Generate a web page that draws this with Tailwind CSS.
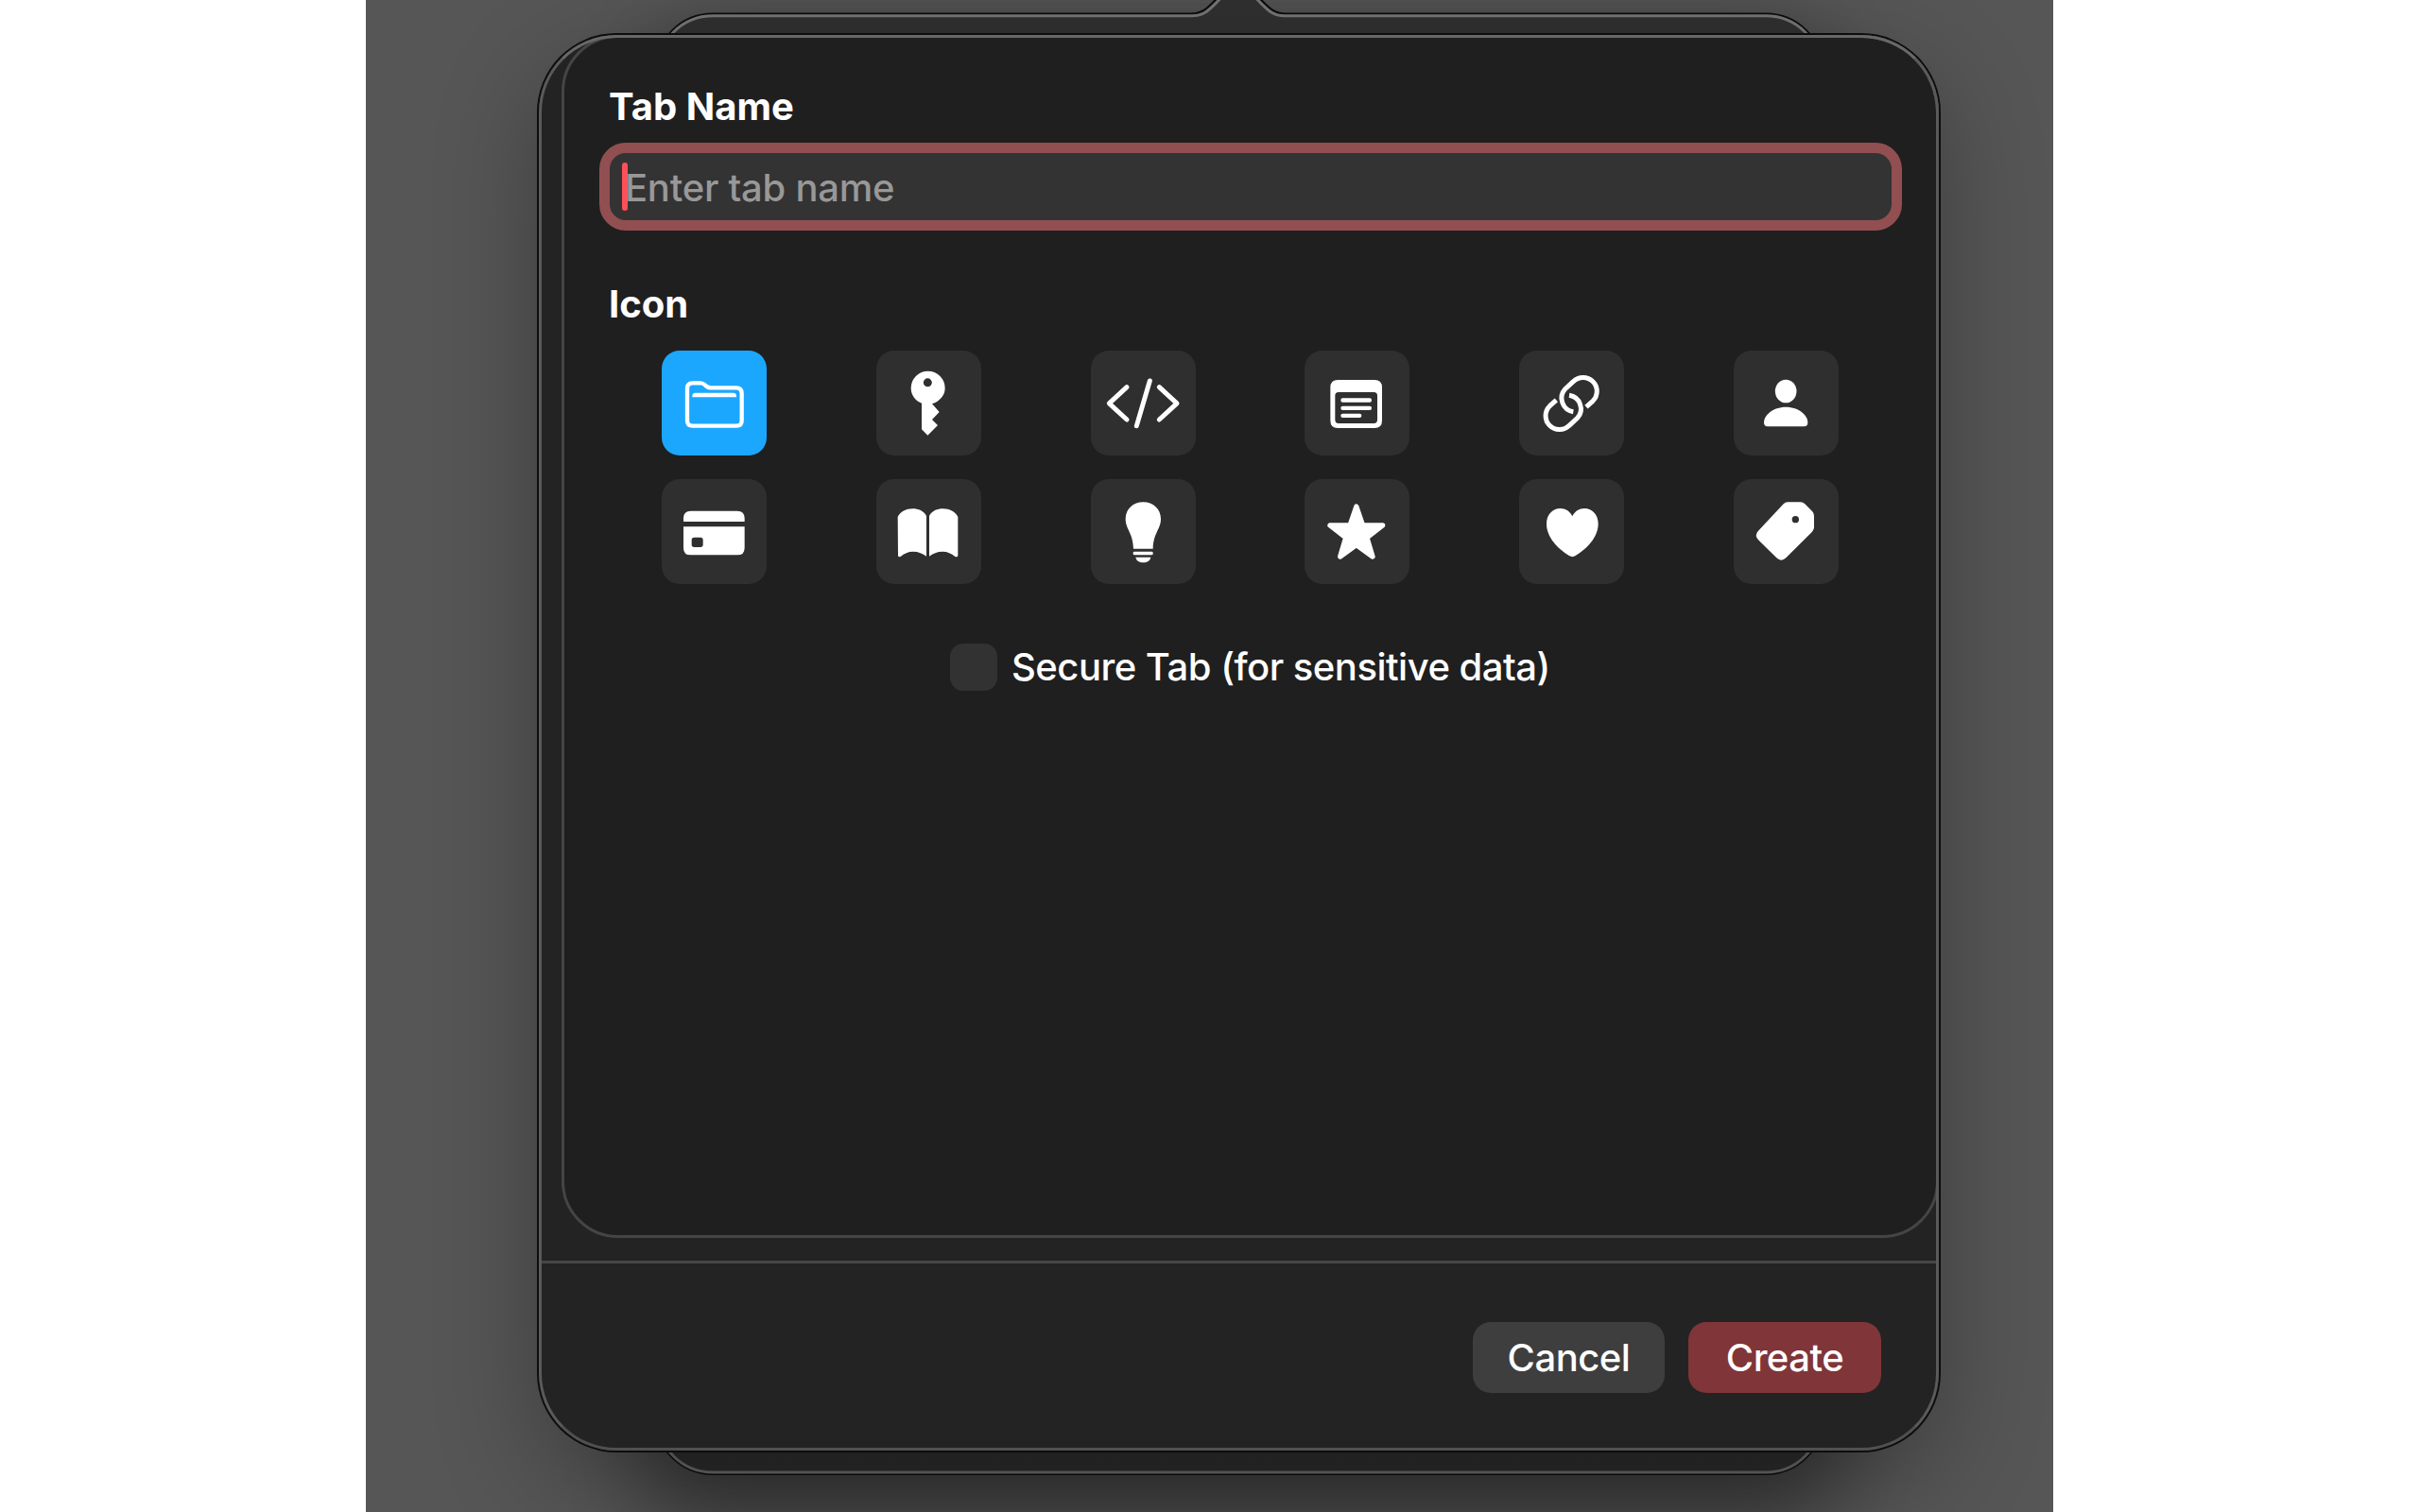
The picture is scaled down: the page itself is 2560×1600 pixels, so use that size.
<!DOCTYPE html>
<html lang="en">
<head>
<meta charset="utf-8">
<title>New Tab</title>
<script src="https://cdn.jsdelivr.net/npm/@tailwindcss/browser@4"></script>
</head>
<body class="bg-white w-[2560px] h-[1600px] overflow-hidden font-[Inter,sans-serif] text-white">
<main class="relative ml-[387px] w-[1785px] h-[1600px] overflow-hidden bg-[#565656] flow-root">

  <!-- popover behind the sheet -->
  <svg class="absolute inset-0" width="1785" height="1600" viewBox="387 0 1785 1600" fill="none">
    <defs>
      <linearGradient id="edge" x1="0" y1="0" x2="0" y2="1"><stop offset="0" stop-color="#757575"/><stop offset="1" stop-color="#646464"/></linearGradient>
      <linearGradient id="back" x1="0" y1="0" x2="0" y2="1"><stop offset="0" stop-color="#303030"/><stop offset="1" stop-color="#2a2a2a"/></linearGradient>
      <filter id="soft" x="-20%" y="-20%" width="140%" height="140%"><feGaussianBlur stdDeviation="45"/></filter>
    </defs>
    <rect x="680" y="40" width="1262" height="1570" rx="70" fill="#000" fill-opacity=".38" filter="url(#soft)"/>
    <path d="M754 15.500H1260C1273 15.500 1278 9 1288 -1L1306 -20H1314L1332 -1C1342 9 1347 15.500 1360 15.500H1868A60 60 0 0 1 1928 75.500V1499A60 60 0 0 1 1868 1559H754A60 60 0 0 1 694 1499V75.500A60 60 0 0 1 754 15.500Z" fill="url(#back)" stroke="#0c0c0c" stroke-width="4"/>
    <path d="M754 16.800H1261C1274 16.800 1279 10.500 1289.500 0L1308 -20H1312L1330.500 0C1341 10.500 1346 16.800 1359 16.800H1868A59 59 0 0 1 1927 75.500V1499A59 59 0 0 1 1868 1558H754A59 59 0 0 1 695 1499V75.500A59 59 0 0 1 754 16.800Z" stroke="url(#edge)" stroke-width="3"/>
  </svg>

  <!-- sheet -->
  <section class="relative ml-[183px] mt-[37px] w-[1481px] h-[1498px] rounded-[82px] bg-[#232323] shadow-[0_0_0_2px_#0d0d0d,0_36px_110px_0px_rgba(0,0,0,0.29)]">
    <div class="ml-6 w-[1457px] h-[1273px] rounded-[60px] rounded-tr-[82px] border-[3px] border-[#454545] bg-[#1f1f1f] px-[37px] pt-[49px]">
      <h2 class="h-12 pl-[10px] text-[40px] leading-[48px] font-bold whitespace-nowrap">Tab Name</h2>
      <div class="mt-[14px] w-[1378px] h-[93px] rounded-[28px] border-[11px] border-[#914f51] bg-[#333333] flex items-center pl-[13px]">
        <span class="w-[6px] h-[51px] rounded-full bg-[#ff5058] shrink-0"></span>
        <span class="-ml-[3px] mt-[2px] text-[40px] leading-[48px] font-[450] tracking-[-0.25px] text-[#989898] whitespace-nowrap">Enter tab name</span>
      </div>
      <h2 class="mt-[54px] h-12 pl-[10px] text-[40px] leading-[48px] font-bold whitespace-nowrap">Icon</h2>
      <div class="mt-[25px] ml-[66px] w-[1245px] grid grid-cols-[repeat(6,111px)] justify-between gap-y-[25px]">
        <svg class="size-[111px] rounded-[19px] bg-[#1ca7ff]" viewBox="61 62 333 333">
          <path d="M142 182Q142 165 159 165H184Q192 165 198 171L204 176Q209 180 216 180H297Q315 180 315 198V284Q315 301 298 301H159Q142 301 142 284Z" fill="none" stroke="#fff" stroke-width="13"/>
          <path d="M158 210V206Q158 196 169 196H287Q298 196 298 206V210Z" fill="#fff"/>
        </svg>
        <svg class="size-[111px] rounded-[19px] bg-[#2f2f2f]" viewBox="742 62 333 333" fill="#fff">
          <path fill-rule="evenodd" d="M886 229C866 221 852 203 852 181A54 54 0 0 1 960 181C960 204 944 222 919 231L942 257L919 281L937 299L905 331L886 312ZM905 150A13.500 13.500 0 1 0 905 177A13.500 13.500 0 1 0 905 150Z"/>
        </svg>
        <svg class="size-[111px] rounded-[19px] bg-[#2f2f2f]" viewBox="43 62 333 333" fill="none" stroke="#fff" stroke-width="15" stroke-linecap="round" stroke-linejoin="round">
          <path d="M157 178L101 229.500L157 281M260 178L316 229.500L260 281M230 158L188 301"/>
        </svg>
        <svg class="size-[111px] rounded-[19px] bg-[#2f2f2f]" viewBox="720 62 333 333" fill="#fff">
          <path fill-rule="evenodd" d="M826 155H942Q966 155 966 179V284Q966 308 942 308H826Q802 308 802 284V179Q802 155 826 155ZM828 194Q817 194 817 205V282Q817 293 828 293H940Q951 293 951 282V205Q951 194 940 194Z"/>
          <rect x="835" y="213" width="98" height="13" rx="6"/><rect x="835" y="238" width="98" height="13" rx="6"/><rect x="835" y="262" width="66" height="13" rx="6"/>
        </svg>
        <svg class="size-[111px] rounded-[19px] bg-[#2f2f2f]" viewBox="51 62 333 333" fill="none" stroke="#fff" stroke-width="15">
          <path d="M264 241L285 222A43.500 43.500 0 0 0 223 160L197 184A43.500 43.500 0 0 0 223 256"/>
          <path d="M169 219L148 238A43.500 43.500 0 0 0 210 300L236 276A43.500 43.500 0 0 0 210 204"/>
        </svg>
        <svg class="size-[111px] rounded-[19px] bg-[#2f2f2f]" viewBox="732 62 333 333" fill="#fff">
          <ellipse cx="897.500" cy="191" rx="34" ry="37"/>
          <path d="M840 303Q828 303 828 290C828 268 855 241 897.500 241S967 268 967 290Q967 303 955 303Z"/>
        </svg>
        <svg class="size-[111px] rounded-[19px] bg-[#2f2f2f]" viewBox="61 470 333 333" fill="#fff">
          <path d="M130 605V594Q130 571 153 571H301Q324 571 324 594V605Z"/>
          <path fill-rule="evenodd" d="M130 621H324V688Q324 711 301 711H153Q130 711 130 688ZM164 655Q156 655 156 663V678Q156 686 164 686H184Q192 686 192 678V663Q192 655 184 655Z"/>
        </svg>
        <svg class="size-[111px] rounded-[19px] bg-[#2f2f2f]" viewBox="742 470 333 333" fill="#fff">
          <path d="M810 590C818 573 837 564 857 564C876 564 893 571 901 587V715C890 706 875 700 859 700C843 700 831 706 819 716Q811 718 811 712Z"/>
          <path d="M1001 590C993 573 974 564 954 564C935 564 918 571 910 587V715C921 706 936 700 952 700C968 700 980 706 992 716Q1001 718 1001 712Z"/>
        </svg>
        <svg class="size-[111px] rounded-[19px] bg-[#2f2f2f]" viewBox="43 470 333 333" fill="#fff">
          <path d="M178 691C177 640 153 630 153 596C153 565 178 543 209 543S265 565 265 596C265 630 241 640 240 691Z"/>
          <rect x="177" y="700" width="63" height="11" rx="4"/>
          <path d="M185 718H233C231 729 221 735 209 735S187 729 185 718Z"/>
        </svg>
        <svg class="size-[111px] rounded-[19px] bg-[#2f2f2f]" viewBox="720 470 333 333" fill="#fff" stroke="#fff" stroke-width="16" stroke-linejoin="round">
          <path d="M884.500 557L905 617H968L918 656L936 716L884.500 679L833 716L851 656L801 617H864Z"/>
        </svg>
        <svg class="size-[111px] rounded-[19px] bg-[#2f2f2f]" viewBox="51 470 333 333" fill="#fff">
          <path d="M220 588C228 571 242 563 258 563C284 563 302 584 302 612C302 655 266 692 229 714Q220 719 211 714C174 692 138 655 138 612C138 584 156 563 182 563C198 563 212 571 220 588Z"/>
        </svg>
        <svg class="size-[111px] rounded-[19px] bg-[#2f2f2f]" viewBox="732 470 333 333" fill="#fff">
          <path fill-rule="evenodd" d="M903 543H944Q952 543 958 549L981 572Q987 578 987 586V623Q987 631 981 637L898 720Q883 734 868 720L810 663Q797 648 810 634L890 549Q896 543 903 543ZM928 587A11 11 0 1 0 928 609A11 11 0 1 0 928 587Z"/>
        </svg>
      </div>
      <label class="mt-[63px] ml-[371px] h-[50px] flex items-center gap-[15px]">
        <span class="size-[50px] rounded-[14px] bg-[#323232] shrink-0"></span>
        <span class="text-[40px] leading-[48px] font-medium tracking-[-0.5px] whitespace-nowrap">Secure Tab (for sensitive data)</span>
      </label>
    </div>
    <div class="mt-6 h-[3px] bg-[#464646]"></div>
    <footer class="flex justify-end gap-[25px] pt-[62px] pr-[61px]">
      <button class="w-[203px] h-[75px] rounded-[19px] bg-[#3e3e3e] text-[40px] leading-[48px] font-medium tracking-[-0.5px]">Cancel</button>
      <button class="w-[204px] h-[75px] rounded-[19px] bg-[#803538] text-[40px] leading-[48px] font-medium tracking-[-0.5px]">Create</button>
    </footer>
    <div class="absolute inset-0 rounded-[82px] border-[3px] border-[#5a5a5a] border-t-[#686868] border-b-[#505050] pointer-events-none"></div>
  </section>
</main>
</body>
</html>
